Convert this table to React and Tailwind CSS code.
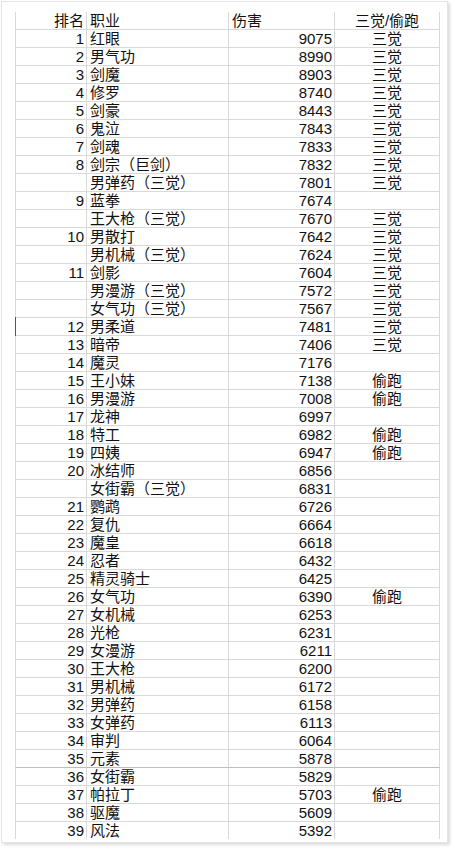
import React from "react";

// 排名 / 职业 / 伤害 / 三觉偷跑
const rows = [
  ["1", "红眼", "9075", "三觉"],
  ["2", "男气功", "8990", "三觉"],
  ["3", "剑魔", "8903", "三觉"],
  ["4", "修罗", "8740", "三觉"],
  ["5", "剑豪", "8443", "三觉"],
  ["6", "鬼泣", "7843", "三觉"],
  ["7", "剑魂", "7833", "三觉"],
  ["8", "剑宗（巨剑）", "7832", "三觉"],
  ["", "男弹药（三觉）", "7801", "三觉"],
  ["9", "蓝拳", "7674", ""],
  ["", "王大枪（三觉）", "7670", "三觉"],
  ["10", "男散打", "7642", "三觉"],
  ["", "男机械（三觉）", "7624", "三觉"],
  ["11", "剑影", "7604", "三觉"],
  ["", "男漫游（三觉）", "7572", "三觉"],
  ["", "女气功（三觉）", "7567", "三觉"],
  ["12", "男柔道", "7481", "三觉"],
  ["13", "暗帝", "7406", "三觉"],
  ["14", "魔灵", "7176", ""],
  ["15", "王小妹", "7138", "偷跑"],
  ["16", "男漫游", "7008", "偷跑"],
  ["17", "龙神", "6997", ""],
  ["18", "特工", "6982", "偷跑"],
  ["19", "四姨", "6947", "偷跑"],
  ["20", "冰结师", "6856", ""],
  ["", "女街霸（三觉）", "6831", ""],
  ["21", "鹦鹉", "6726", ""],
  ["22", "复仇", "6664", ""],
  ["23", "魔皇", "6618", ""],
  ["24", "忍者", "6432", ""],
  ["25", "精灵骑士", "6425", ""],
  ["26", "女气功", "6390", "偷跑"],
  ["27", "女机械", "6253", ""],
  ["28", "光枪", "6231", ""],
  ["29", "女漫游", "6211", ""],
  ["30", "王大枪", "6200", ""],
  ["31", "男机械", "6172", ""],
  ["32", "男弹药", "6158", ""],
  ["33", "女弹药", "6113", ""],
  ["34", "审判", "6064", ""],
  ["35", "元素", "5878", ""],
  ["36", "女街霸", "5829", ""],
  ["37", "帕拉丁", "5703", "偷跑"],
  ["38", "驱魔", "5609", ""],
  ["39", "风法", "5392", ""],
];

const font = { fontFamily: '"Liberation Sans", "Noto Sans CJK SC", sans-serif' };

const Row = ({ cells, header, seam, active }) => {
  const line = seam ? "border-b-[#bdbdbd]" : "border-b-[#d9d9d9]";
  return (
    <div className="grid grid-cols-[72px_142px_106px_105px] h-[18px] leading-[17px] text-[15px] text-[#111]">
      <div className={`relative border-l border-r border-b border-[#d9d9d9] ${line} text-right pr-[2px]`}>
        {active && <span className="absolute -left-[2px] -top-px h-[19px] w-[2px] bg-[#217346]" />}
        {cells[0]}
      </div>
      <div className={`border-r border-b border-[#d9d9d9] ${line} pl-[3px] whitespace-nowrap`}>{cells[1]}</div>
      <div className={`border-r border-b border-[#d9d9d9] ${line} ${header ? "text-left pl-[3px]" : "text-right pr-[2px]"}`}>{cells[2]}</div>
      <div className={`border-r border-b border-[#d9d9d9] ${line} text-center`}>{cells[3]}</div>
    </div>
  );
};

export default function App() {
  return (
    <div className="w-[453px] h-[849px] bg-white p-px" style={font}>
      <div className="w-[447px] h-[842px] bg-white border border-[#e4e4e4] shadow-[2px_2px_3px_rgba(0,0,0,0.14)] pl-[13px] pt-[10px]">
        <div className="h-[827px] overflow-hidden">
          <Row cells={["排名", "职业", "伤害", "三觉/偷跑"]} header />
          {rows.map((r, i) => (
            <Row key={i} cells={r} seam={i === 40} active={i === 16} />
          ))}
        </div>
      </div>
    </div>
  );
}
